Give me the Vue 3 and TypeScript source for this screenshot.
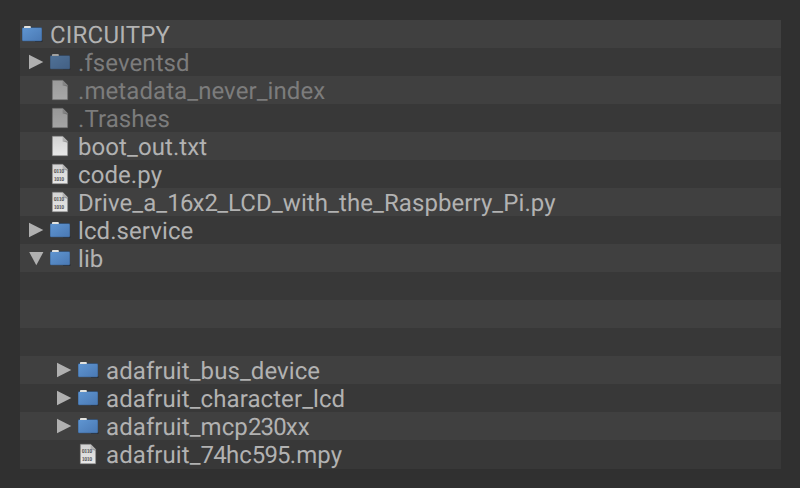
<script setup lang="ts">
type Kind = 'folder' | 'file' | 'binary' | 'blank'

interface Entry {
  name: string
  kind: Kind
  depth: number
  arrow?: 'closed' | 'open'
  hidden?: boolean
}

interface Run {
  text: string
  type: 'digits' | 'caps' | 'plain'
}

const entries: Entry[] = [
  { name: 'CIRCUITPY', kind: 'folder', depth: 0 },
  { name: '.fseventsd', kind: 'folder', depth: 1, arrow: 'closed', hidden: true },
  { name: '.metadata_never_index', kind: 'file', depth: 1, hidden: true },
  { name: '.Trashes', kind: 'file', depth: 1, hidden: true },
  { name: 'boot_out.txt', kind: 'file', depth: 1 },
  { name: 'code.py', kind: 'binary', depth: 1 },
  { name: 'Drive_a_16x2_LCD_with_the_Raspberry_Pi.py', kind: 'binary', depth: 1 },
  { name: 'lcd.service', kind: 'folder', depth: 1, arrow: 'closed' },
  { name: 'lib', kind: 'folder', depth: 1, arrow: 'open' },
  { name: '', kind: 'blank', depth: 0 },
  { name: '', kind: 'blank', depth: 0 },
  { name: '', kind: 'blank', depth: 0 },
  { name: 'adafruit_bus_device', kind: 'folder', depth: 2, arrow: 'closed' },
  { name: 'adafruit_character_lcd', kind: 'folder', depth: 2, arrow: 'closed' },
  { name: 'adafruit_mcp230xx', kind: 'folder', depth: 2, arrow: 'closed' },
  { name: 'adafruit_74hc595.mpy', kind: 'binary', depth: 2 },
]

// Numerals are set tighter than letters, and all-caps words slightly looser.
function runs(name: string): Run[] {
  return (name.match(/\d+|[A-Z]{4,}|(?:(?![A-Z]{4,})\D)+/g) ?? []).map((text) => ({
    text,
    type: /^\d/.test(text) ? 'digits' : /^[A-Z]{4,}$/.test(text) ? 'caps' : 'plain',
  }))
}
</script>

<template>
  <main class="page">
    <svg class="defs" width="0" height="0" aria-hidden="true">
      <defs>
        <linearGradient id="folder-fill" x1="0" y1="0" x2="1" y2="1">
          <stop offset="0" stop-color="#5f95d1" />
          <stop offset="1" stop-color="#4a79b4" />
        </linearGradient>
        <linearGradient id="paper-fill" x1="0" y1="0" x2="0" y2="1">
          <stop offset="0" stop-color="#d2d2d2" />
          <stop offset="1" stop-color="#e8e8e8" />
        </linearGradient>
      </defs>
    </svg>
    <ul class="tree">
      <li v-for="(entry, i) in entries" :key="i" class="row" :class="{ hidden: entry.hidden }">
        <template v-if="entry.kind !== 'blank'">
          <span v-for="n in entry.depth" :key="n" class="slot">
            <svg v-if="n === entry.depth && entry.arrow" class="glyph" viewBox="0 0 28 28">
              <path v-if="entry.arrow === 'closed'" class="arrow" d="M9 6.8 L23.3 14 L9 21.2 Z" />
              <path v-else class="arrow" d="M9.2 8 H23.4 L16.3 21.2 Z" />
            </svg>
          </span>
          <span class="slot icon">
            <svg v-if="entry.kind === 'folder'" class="glyph" viewBox="0 0 28 28">
              <path d="M15 20 H22.5 V22 H15 Z" fill="#2b2e33" />
              <rect x="2" y="7.2" width="20" height="14.1" rx="1.2" fill="#345985" />
              <rect x="2.4" y="8" width="19.2" height="12.8" rx=".8" fill="url(#folder-fill)" />
              <path d="M4 8 V6.7 Q4 5.9 4.8 5.9 H10 Q10.8 5.9 10.8 6.7 V8 Z" fill="#e2e2de" />
            </svg>
            <svg v-else class="glyph" viewBox="0 0 28 28">
              <path d="M4.3 4.2 H14.7 L19.7 9.3 V23.8 H4.3 Z" fill="url(#paper-fill)" stroke="#777" stroke-width=".5" />
              <path d="M14.6 4.3 V9.4 H19.6 Z" fill="#b0b0b0" />
              <path d="M14.6 9.4 H19.6 V10.6 Z" fill="#777" />
              <g v-if="entry.kind === 'binary'" class="bits">
                <text x="6" y="13.2" textLength="10" lengthAdjust="spacingAndGlyphs">0110</text>
                <text x="6" y="21.1" textLength="10" lengthAdjust="spacingAndGlyphs">1010</text>
              </g>
            </svg>
          </span>
          <span class="name"><span v-for="(run, r) in runs(entry.name)" :key="r" :class="run.type">{{ run.text }}</span></span>
        </template>
      </li>
    </ul>
  </main>
</template>

<style>
body {
  margin: 0;
  background: #303030;
}
</style>

<style scoped>
.page {
  box-sizing: border-box;
  height: 488px;
  padding: 20px 19px 19px 20px;
  background: #303030;
  overflow: hidden;
}
.defs {
  display: block;
}
.tree {
  margin: 0;
  padding: 0;
  list-style: none;
}
.row {
  display: flex;
  height: 28px;
  background: #404040;
  color: #b2b2b2;
}
.row:nth-child(even) {
  background: #383838;
}
.row:last-child {
  padding-bottom: 1px;
}
.slot {
  flex: none;
  width: 28px;
  height: 28px;
}
.icon {
  margin-right: 2px;
}
.glyph {
  display: block;
  width: 28px;
  height: 28px;
}
.arrow {
  fill: #b0b0b0;
}
.bits {
  opacity: 0.99;
}
.bits text {
  font-family: 'Liberation Serif', serif;
  font-size: 5.8px;
  fill: #333;
  stroke: #333;
  stroke-width: 0.15px;
}
.name {
  font-family: Roboto, sans-serif;
  font-size: 24px;
  line-height: 30px;
  white-space: pre;
  text-rendering: geometricPrecision;
}
.plain {
  letter-spacing: 0.08px;
}
.caps {
  letter-spacing: 0.22px;
}
.digits {
  letter-spacing: -0.85px;
}
.hidden .name {
  color: #7c7c7c;
}
.hidden .icon {
  opacity: 0.62;
}
</style>
